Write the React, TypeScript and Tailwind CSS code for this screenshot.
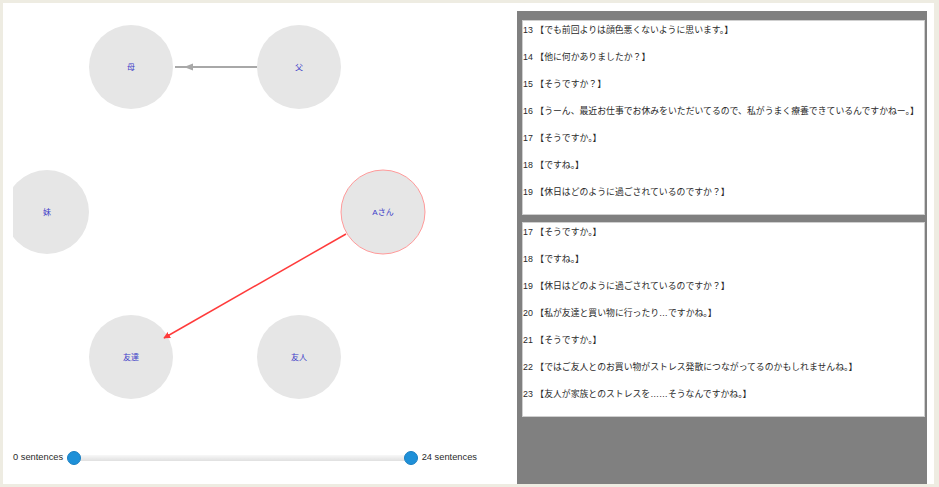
import React from "react";

const top = [
  ["13", "【でも前回よりは顔色悪くないように思います。】"],
  ["14", "【他に何かありましたか？】"],
  ["15", "【そうですか？】"],
  ["16", "【うーん、最近お仕事でお休みをいただいてるので、私がうまく療養できているんですかねー。】"],
  ["17", "【そうですか。】"],
  ["18", "【ですね。】"],
  ["19", "【休日はどのように過ごされているのですか？】"],
];
const bottom = [
  ["17", "【そうですか。】"],
  ["18", "【ですね。】"],
  ["19", "【休日はどのように過ごされているのですか？】"],
  ["20", "【私が友達と買い物に行ったり…ですかね。】"],
  ["21", "【そうですか。】"],
  ["22", "【ではご友人とのお買い物がストレス発散につながってるのかもしれませんね。】"],
  ["23", "【友人が家族とのストレスを……そうなんですかね。】"],
];

const nodes = [
  { id: "母", x: 131, y: 67 },
  { id: "父", x: 299, y: 67 },
  { id: "妹", x: 47, y: 212 },
  { id: "Aさん", x: 383, y: 212, sel: true },
  { id: "友達", x: 131, y: 357 },
  { id: "友人", x: 299, y: 357 },
];

function Box({ lines }: { lines: string[][] }) {
  return (
    <div className="h-[195px] w-[403px] shrink-0 border border-[#cfcfcf] bg-white pt-[2px]">
      <div className="flex flex-col gap-[13px]">
        {lines.map(([n, t], i) => (
          <div key={i} className="whitespace-nowrap text-[8.85px] leading-[14px] text-[#2a2a2a]">
            {n} {t}
          </div>
        ))}
      </div>
    </div>
  );
}

export default function App() {
  return (
    <div
      className="flex h-[487px] w-[939px] bg-[#eeece2] pb-[3px] pl-[3px] pr-[5px] pt-[3px]"
      style={{ fontFamily: '"Liberation Sans", "Noto Sans CJK JP", sans-serif' }}
    >
      <div className="flex h-full w-full bg-white">
        <div className="flex w-[514px] shrink-0 flex-col pl-[10px]">
          <svg width="487" height="428" viewBox="13 3 487 428" className="block">
            <defs>
              <marker id="redhead" viewBox="0 0 10 10" refX="9" refY="5" markerWidth="4.5" markerHeight="4.5" orient="auto">
                <path d="M0,0 L10,5 L0,10 z" fill="#ff3b3b" />
              </marker>
            </defs>
            {nodes.map((n) => (
              <circle
                key={n.id}
                cx={n.x}
                cy={n.y}
                r={42}
                fill="#e6e6e6"
                stroke={n.sel ? "#ff9a9a" : "none"}
                strokeWidth={1}
              />
            ))}
            <line x1={257} y1={67} x2={175} y2={67} stroke="#a8a8a8" strokeWidth={2} />
            <polygon points="184,67 193,63.5 193,70.5" fill="#a8a8a8" />
            <line
              x1={346}
              y1={234}
              x2={164}
              y2={338}
              stroke="#ff3b3b"
              strokeWidth={1.5}
              markerEnd="url(#redhead)"
            />
            {nodes.map((n) => (
              <text
                key={n.id + "t"}
                x={n.x}
                y={n.y + 3}
                textAnchor="middle"
                fontSize={8}
                fill="#3c3cc8"
                style={{ fontFamily: '"Liberation Sans", "Noto Sans CJK JP", sans-serif' }}
              >
                {n.id}
              </text>
            ))}
          </svg>
          <div className="flex h-[53px] items-center text-[9.3px] text-[#2a2a2a]">
            <span>0 sentences</span>
            <div className="relative ml-[3.5px] h-[14px] w-[351px]">
              <div className="absolute left-[7px] right-[7px] top-[4px] h-[6px] rounded-[3px] bg-gradient-to-b from-[#f8f8f8] to-[#e0e0e0]" />
              <div className="absolute left-0 top-0 h-[14px] w-[14px] rounded-full border border-[#1a7fc2] bg-[#1e90d8]" />
              <div className="absolute right-0 top-0 h-[14px] w-[14px] rounded-full border border-[#1a7fc2] bg-[#1e90d8]" />
            </div>
            <span className="ml-[4px]">24 sentences</span>
          </div>
        </div>
        <div className="mt-[8px] flex w-[410px] shrink-0 flex-col gap-[7px] bg-[#808080] pl-[5px] pr-[2px] pt-[9px]">
          <Box lines={top} />
          <Box lines={bottom} />
        </div>
      </div>
    </div>
  );
}
